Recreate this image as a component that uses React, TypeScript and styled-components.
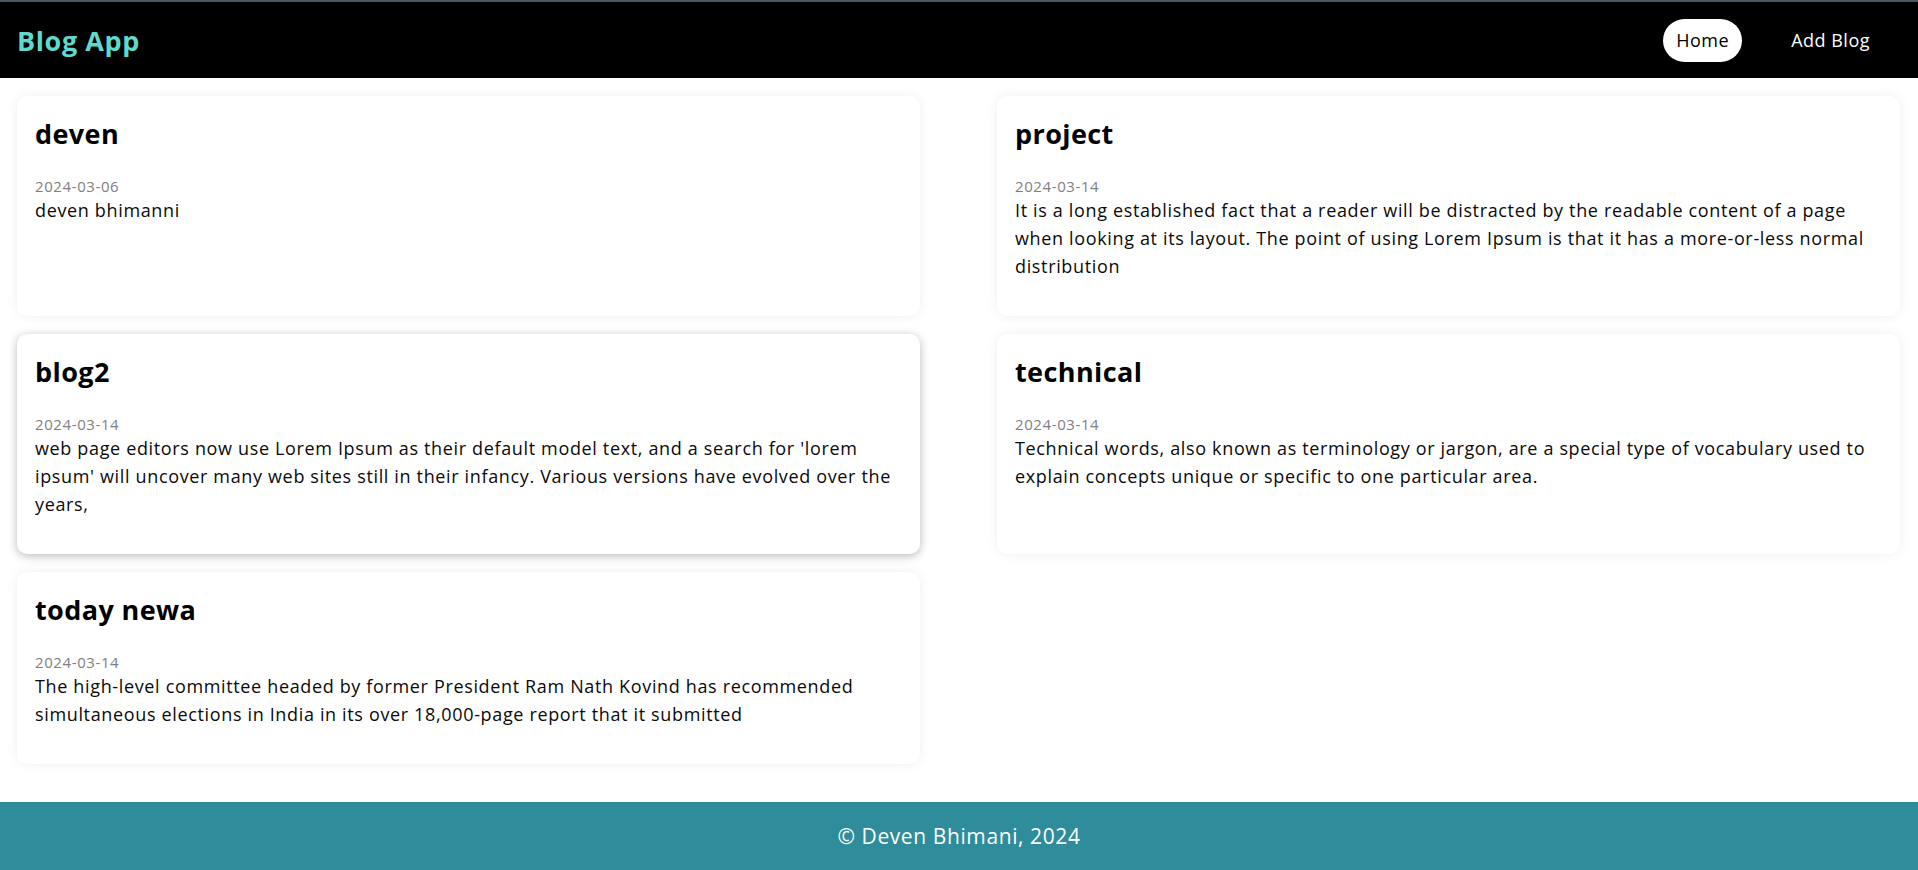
import React from "react";
import styled, { createGlobalStyle } from "styled-components";

const GlobalStyle = createGlobalStyle`
  * { box-sizing: border-box; }
  html, body { margin: 0; padding: 0; background: #ffffff; }
  body { font-family: "Open Sans", "Noto Sans", sans-serif; color: #000; }
`;

const Page = styled.div`
  min-height: 100vh;
  display: flex;
  flex-direction: column;
`;

const Navbar = styled.header`
  height: 78px;
  background: #000;
  border-top: 2px solid #4a5866;
  display: flex;
  align-items: center;
  justify-content: space-between;
  padding: 0 35px 0 17px;
`;

const Brand = styled.div`
  font-weight: 700;
  font-size: 27px;
  color: #5ed9cc;
  letter-spacing: 0.6px;
`;

const NavLinks = styled.nav`
  display: flex;
  align-items: center;
  gap: 36px;
`;

const NavButton = styled.a<{ $active?: boolean }>`
  display: inline-flex;
  align-items: center;
  height: 43px;
  padding: 0 13px;
  border-radius: 22px;
  font-size: 18px;
  letter-spacing: 0.5px;
  text-decoration: none;
  cursor: pointer;
  background: ${(p) => (p.$active ? "#ffffff" : "transparent")};
  color: ${(p) => (p.$active ? "#000000" : "#ffffff")};
`;

const Main = styled.main`
  display: grid;
  grid-template-columns: 1fr 1fr;
  column-gap: 77px;
  row-gap: 18px;
  padding: 18px 18px 34px 17px;
  align-items: stretch;
`;

const Card = styled.article<{ $raised?: boolean }>`
  background: #fff;
  border-radius: 10px;
  padding: 18px;
  box-shadow: ${(p) =>
    p.$raised
      ? "0 2px 10px rgba(0, 0, 0, 0.28)"
      : "0 0 12px rgba(0, 0, 0, 0.07)"};
`;

const Title = styled.h2`
  margin: 0;
  font-size: 27px;
  font-weight: 700;
  line-height: 40px;
  color: #000;
  letter-spacing: 0.4px;
`;

const DateText = styled.div`
  margin-top: 22px;
  font-size: 15px;
  line-height: 20px;
  letter-spacing: 0.6px;
  color: #808080;
`;

const Body = styled.p`
  margin: 0 0 18px;
  font-size: 18px;
  line-height: 28px;
  letter-spacing: 0.65px;
  color: #0a0a0a;
`;

const Footer = styled.footer`
  margin-top: auto;
  height: 68px;
  background: #2e8c9b;
  color: #fff;
  display: flex;
  align-items: center;
  justify-content: center;
  font-size: 21px;
  letter-spacing: 0.6px;
`;

const posts = [
  { title: "deven", date: "2024-03-06", body: "deven bhimanni" },
  {
    title: "project",
    date: "2024-03-14",
    body:
      "It is a long established fact that a reader will be distracted by the readable content of a page when looking at its layout. The point of using Lorem Ipsum is that it has a more-or-less normal distribution",
  },
  {
    title: "blog2",
    date: "2024-03-14",
    body:
      "web page editors now use Lorem Ipsum as their default model text, and a search for 'lorem ipsum' will uncover many web sites still in their infancy. Various versions have evolved over the years,",
    raised: true,
  },
  {
    title: "technical",
    date: "2024-03-14",
    body:
      "Technical words, also known as terminology or jargon, are a special type of vocabulary used to explain concepts unique or specific to one particular area.",
  },
  {
    title: "today newa",
    date: "2024-03-14",
    body:
      "The high-level committee headed by former President Ram Nath Kovind has recommended simultaneous elections in India in its over 18,000-page report that it submitted",
  },
];

export default function App() {
  return (
    <>
      <GlobalStyle />
      <Page>
        <Navbar>
          <Brand>Blog App</Brand>
          <NavLinks>
            <NavButton $active>Home</NavButton>
            <NavButton>Add Blog</NavButton>
          </NavLinks>
        </Navbar>
        <Main>
          {posts.map((p) => (
            <Card key={p.title} $raised={p.raised}>
              <Title>{p.title}</Title>
              <DateText>{p.date}</DateText>
              <Body>{p.body}</Body>
            </Card>
          ))}
        </Main>
        <Footer>© Deven Bhimani, 2024</Footer>
      </Page>
    </>
  );
}
